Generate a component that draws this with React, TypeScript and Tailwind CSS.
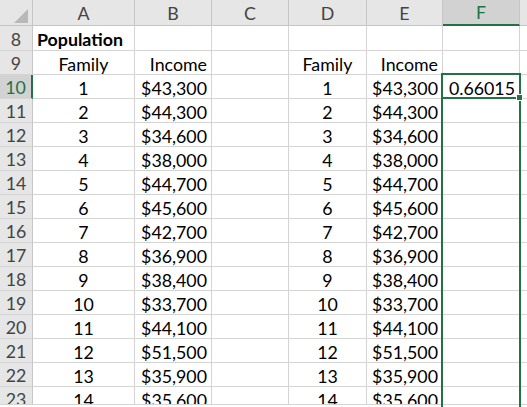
const cols = [
  { key: "A", w: "w-[102px]" },
  { key: "B", w: "w-[77px]" },
  { key: "C", w: "w-[77px]" },
  { key: "D", w: "w-[78px]" },
  { key: "E", w: "w-[76px]" },
  { key: "F", w: "w-[77px]" },
]

const data: [number, string][] = [
  [1, "$43,300"],
  [2, "$44,300"],
  [3, "$34,600"],
  [4, "$38,000"],
  [5, "$44,700"],
  [6, "$45,600"],
  [7, "$42,700"],
  [8, "$36,900"],
  [9, "$38,400"],
  [10, "$33,700"],
  [11, "$44,100"],
  [12, "$51,500"],
  [13, "$35,900"],
  [14, "$35,600"],
]

type Cell = { text?: string; align?: "left" | "center" | "right"; bold?: boolean }

function Row({ num, cells, h, active }: { num: number; cells: Cell[]; h: string; active?: boolean }) {
  return (
    <div className={`flex ${h}`}>
      <div
        className={`w-[33px] shrink-0 flex items-center justify-center border-b border-[#d4d4d4] pt-[2px] ${
          active
            ? "bg-[#d2d2d2] text-[#217346] border-r-2 border-r-[#217346]"
            : "bg-[#e6e6e6] text-[#444] border-r border-r-[#c6c6c6]"
        }`}
      >
        {num}
      </div>
      {cols.map((c, i) => {
        const cell = cells[i] || {}
        const align =
          cell.align === "right" ? "justify-end pr-[4px]" : cell.align === "center" ? "justify-center" : "justify-start pl-[4px]"
        return (
          <div
            key={c.key}
            className={`${c.w} shrink-0 flex items-center pt-[3px] border-r border-b border-[#d4d4d4] whitespace-nowrap ${align} ${
              cell.bold ? "font-bold" : ""
            }`}
          >
            {cell.text}
          </div>
        )
      })}
      <div className="flex-1 border-b border-[#d4d4d4]" />
    </div>
  )
}

export default function App() {
  return (
    <div
      className="relative w-[527px] h-[407px] bg-white overflow-hidden text-[17.8px] text-black"
      style={{ fontFamily: "Lato, 'Open Sans', sans-serif" }}
    >
      <div className="h-[405px] overflow-hidden border-b border-[#d4d4d4]">
        {/* column headers */}
        <div className="flex h-[26px] bg-[#e6e6e6] text-[#444]">
          <div className="w-[33px] shrink-0 border-r border-b border-[#c6c6c6] flex items-end justify-end pr-[4px] pb-[2px]">
            <svg width="14" height="14" viewBox="0 0 14 14">
              <polygon points="0,14 14,14 14,0" fill="#b8b8b8" />
            </svg>
          </div>
          {cols.map((c) =>
            c.key === "F" ? (
              <div
                key={c.key}
                className={`${c.w} shrink-0 flex items-center justify-center pt-[1px] bg-[#d2d2d2] text-[#217346] border-r border-r-[#c6c6c6] border-b-2 border-b-[#217346]`}
              >
                {c.key}
              </div>
            ) : (
              <div
                key={c.key}
                className={`${c.w} shrink-0 flex items-center justify-center pt-[2px] border-r border-b border-[#c6c6c6]`}
              >
                {c.key}
              </div>
            )
          )}
          <div className="flex-1 border-b border-[#c6c6c6]" />
        </div>

        <Row num={8} h="h-[25px]" cells={[{ text: "Population", bold: true }]} />
        <Row
          num={9}
          h="h-[24px]"
          cells={[
            { text: "Family", align: "center" },
            { text: "Income", align: "right" },
            {},
            { text: "Family", align: "center" },
            { text: "Income", align: "right" },
          ]}
        />
        {data.map(([n, inc], i) => (
          <Row
            key={n}
            num={10 + i}
            h="h-[24px]"
            active={i === 0}
            cells={[
              { text: String(n), align: "center" },
              { text: inc, align: "right" },
              {},
              { text: String(n), align: "center" },
              { text: inc, align: "right" },
              i === 0 ? { text: "0.66015", align: "right" } : {},
            ]}
          />
        ))}
      </div>

      {/* selection border over column F */}
      <div className="absolute left-[441px] top-[73px] w-[80px] h-[340px] border-2 border-[#217346]" />
      <div className="absolute left-[441px] top-[97px] w-[80px] h-[2px] bg-[#217346]" />
      <div className="absolute left-[516px] top-[94px] w-[7px] h-[7px] bg-[#217346] border border-white" />
    </div>
  )
}
